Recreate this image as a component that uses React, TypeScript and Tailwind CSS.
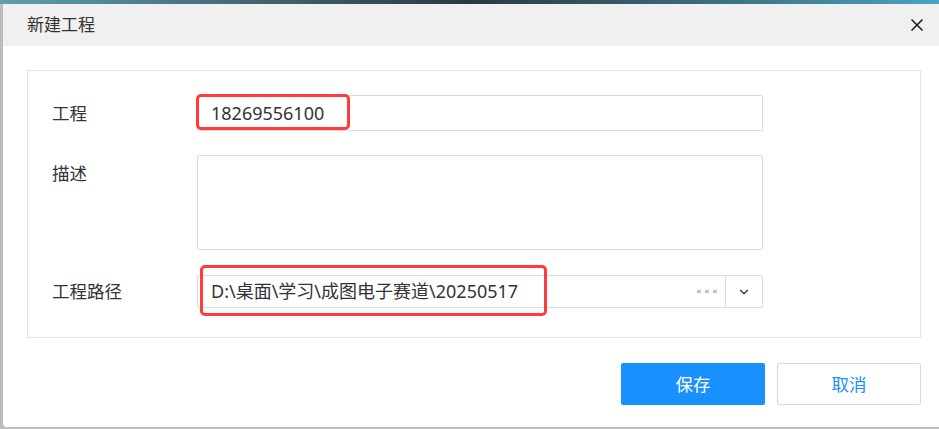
import { ChevronDown, X } from 'lucide-react';

const font = { fontFamily: '"Noto Sans", "Noto Sans CJK SC", sans-serif' };

export default function App() {
  return (
    <div className="w-[939px] h-[429px] overflow-hidden bg-[#bdbdbd] flex flex-col" style={font}>
      {/* strip of the desktop behind the dialog */}
      <div className="h-[4px] shrink-0 bg-gradient-to-r from-[#5f9fb0] via-[#2a3a40] to-[#4aa3c0]" />
      <div className="flex flex-1 min-h-0">
        <div className="w-[3px] shrink-0 bg-[#bcbcbc]" />
        <div className="flex-1 flex flex-col bg-white mb-[2px] rounded-bl-[4px] overflow-hidden">
          <div className="h-[42px] shrink-0 bg-[#f0f0f0] flex items-center justify-between pl-[24px] pr-[12px]">
            <span className="text-[17px] text-[#333]">新建工程</span>
            <X size={20} strokeWidth={2} className="text-[#222]" />
          </div>

          <div className="pt-[24px] pl-[24px] pr-[18px]">
            <div className="border border-[#e6e6e6] h-[268px] pt-[24px] pl-[24px]">
              <div className="flex items-center h-[36px]">
                <span className="w-[145px] text-[17.5px] text-[#333]">工程</span>
                <div className="relative w-[566px] h-[36px] border border-[#dcdcdc] rounded-[2px] flex items-center pl-[13px]">
                  <span className="text-[18px] text-[#333]">18269556100</span>
                  <div className="absolute left-[-2px] top-[-2px] w-[154px] h-[36px] border-[3px] border-[#ff3b3b] rounded-[5px]" />
                </div>
              </div>

              <div className="flex mt-[24px]">
                <span className="w-[145px] text-[17.5px] text-[#333] pt-[5px]">描述</span>
                <div className="w-[566px] h-[95px] border border-[#dcdcdc] rounded-[2px]" />
              </div>

              <div className="flex items-center mt-[25px]">
                <span className="w-[145px] text-[17.5px] text-[#333]">工程路径</span>
                <div className="relative w-[566px] h-[33px] flex">
                  <div className="flex-1 border border-[#dcdcdc] rounded-l-[2px] flex items-center pl-[13px] pr-[8px]">
                    <span className="flex-1 text-[18px] text-[#333] whitespace-nowrap">D:\桌面\学习\成图电子赛道\20250517</span>
                    <span className="flex gap-[4px]">
                      <span className="w-[4px] h-[3px] bg-[#c4c4c4]" />
                      <span className="w-[4px] h-[3px] bg-[#c4c4c4]" />
                      <span className="w-[4px] h-[3px] bg-[#c4c4c4]" />
                    </span>
                  </div>
                  <div className="w-[37px] border border-l-0 border-[#dcdcdc] rounded-r-[2px] flex items-center justify-center">
                    <ChevronDown size={14} strokeWidth={2} className="text-[#333]" />
                  </div>
                  <div className="absolute left-[3px] top-[-10px] w-[347px] h-[51px] border-[3px] border-[#ff3b3b] rounded-[5px]" />
                </div>
              </div>
            </div>
          </div>

          <div className="flex justify-end gap-[12px] pr-[18px] mt-[25px]">
            <button className="w-[144px] h-[42px] rounded-[2px] bg-[#1890ff] text-white text-[17.5px]">保存</button>
            <button className="w-[144px] h-[42px] rounded-[2px] border border-[#d9d9d9] bg-white text-[#1890ff] text-[17.5px]">取消</button>
          </div>
        </div>
      </div>
    </div>
  );
}
